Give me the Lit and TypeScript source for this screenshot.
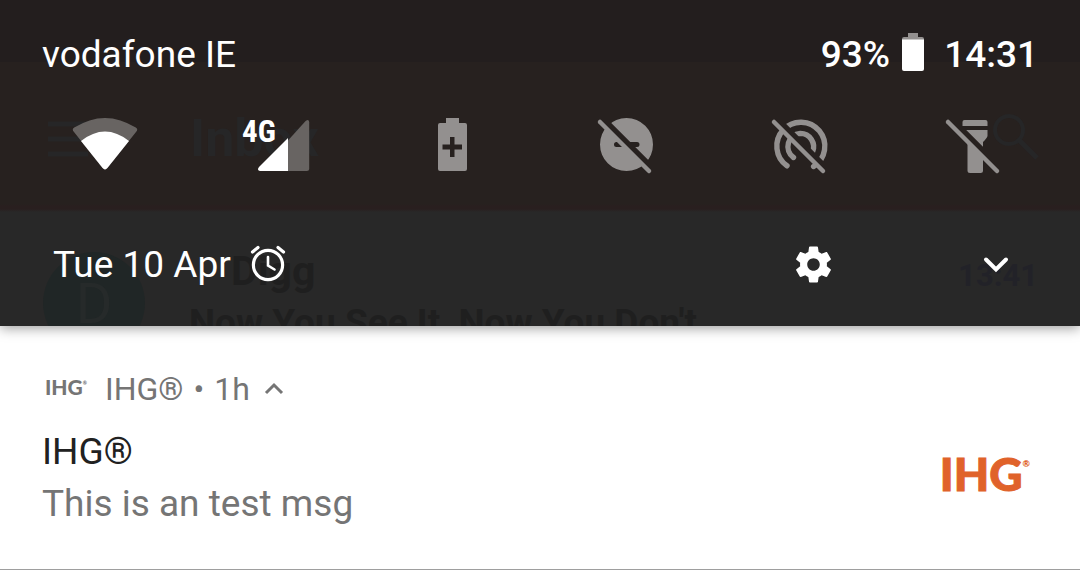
import { LitElement, html, svg, css } from "lit";
import { customElement } from "lit/decorators.js";

const slash = svg`<path d="M6 9 55 58" stroke="currentColor" stroke-width="4.5" stroke-linecap="round" />`;
const cut = (id: string) => svg`<mask id=${id} maskUnits="userSpaceOnUse" x="0" y="0" width="64" height="64">
  <path d="M0 0h64v64H0z" fill="#fff" />
  <path d="M5 2 64 61" stroke="#000" stroke-width="6" />
</mask>`;

const tiles = [
  {
    label: "Wi-Fi",
    cls: "on",
    art: svg`
      <path class="dim" d="M1 19Q-1.6 16.6 1.2 14.6Q32 -4.8 62.8 14.6Q65.6 16.6 63 19L34.4 55Q32 57.8 29.6 55Z" />
      <path d="M8 28Q32 9 56 28L34.4 55Q32 57.8 29.6 55Z" fill="#fff" />`,
  },
  {
    label: "Mobile data",
    cls: "on",
    art: svg`
      <path class="dim" d="M41 27.500L58.600 8q3.600-2.600 3.600 1.500V55.500q0 2.500-2.500 2.500H41z" />
      <path d="M41 25V58H13q-3.500-1-1-4z" fill="#fff" />
      <text class="network" x="-5" y="29">4G</text>`,
  },
  {
    label: "Battery Saver",
    cls: "off",
    art: svg`
      <path fill="currentColor" fill-rule="evenodd" d="M25 5h13v5h6q2 0 2 2v44q0 2-2 2H19q-2 0-2-2V12q0-2 2-2h6zM29 24v7.500H21.500v5H29V44h4.500v-7.500H41v-5h-7.500V24z" />`,
  },
  {
    label: "Do not disturb",
    cls: "off",
    art: svg`${cut("cut-dnd")}
      <path mask="url(#cut-dnd)" fill="currentColor" fill-rule="evenodd" d="M32.500 5a26.500 26.500 0 1 0 0 53a26.500 26.500 0 1 0 0-53zM22.500 29a2.500 2.500 0 0 0 0 5h20.500a2.500 2.500 0 0 0 0-5z" />${slash}`,
  },
  {
    label: "Hotspot",
    cls: "off",
    art: svg`${cut("cut-hotspot")}
      <g mask="url(#cut-hotspot)" stroke="currentColor" stroke-width="5.400" stroke-linecap="round">
        <path d="M19 52.800A24 24 0 1 1 45.600 53.500" />
        <path d="M25.500 44.500A13.300 13.300 0 0 1 32.300 20.400A13.300 13.300 0 0 1 44.500 39" />
      </g>${slash}`,
  },
  {
    label: "Flashlight",
    cls: "off",
    art: svg`${cut("cut-torch")}
      <path fill="currentColor" d="M20.500 9q0-2 2-2h21q2 0 2 2v4h-25z" />
      <path mask="url(#cut-torch)" fill="currentColor" d="M20.500 17h25v6q-.5 2-4.500 6v28.500q0 2.500-2.500 2.500h-10.500q-2.500 0-2.500-2.500V29q-5-4-5-6z" />${slash}`,
  },
];

@customElement("app-root")
export class AppRoot extends LitElement {
  static styles = css`
    :host {
      display: block;
      background: #fff;
      color: #fff;
      font-family: Roboto, "Noto Sans", sans-serif;
      font-size: 37px;
      line-height: 44px;
    }
    * {
      box-sizing: border-box;
    }
    button {
      display: block;
      margin: 0;
      padding: 0;
      border: 0;
      background: none;
      color: inherit;
      font: inherit;
    }
    svg {
      display: block;
      fill: none;
      overflow: visible;
    }
    .panel {
      position: relative;
      padding: 33px 0 39px;
      background: linear-gradient(#231e1e 62px, #27211f 62px 204px, #291f1f 206px 209px, #282828 212px);
      box-shadow: 0 2px 12px rgba(0, 0, 0, 0.4);
    }
    .status,
    .tiles,
    .date-row {
      position: relative;
      display: flex;
      align-items: center;
      justify-content: space-between;
    }
    .status {
      padding: 0 42px;
    }
    .system {
      display: flex;
      align-items: center;
      font-weight: 500;
    }
    .battery {
      margin: 0 20px 6px 12px;
    }
    .tiles {
      padding: 36px 74px 0 73px;
    }
    .off {
      color: #93908f;
    }
    .dim {
      fill: #686462;
    }
    .network {
      fill: #fff;
      font: 700 31px "Roboto Condensed", "Liberation Sans Narrow", Roboto, sans-serif;
    }
    .date-row {
      padding: 66px 72px 0 53px;
    }
    .date {
      display: flex;
      align-items: center;
      gap: 19px;
    }
    .alarm {
      margin-bottom: 2px;
    }
    .actions {
      display: flex;
      align-items: center;
      gap: 149px;
    }
    .settings {
      margin-bottom: 1px;
    }
    .behind {
      position: absolute;
      inset: 0;
      overflow: hidden;
      font-weight: 700;
    }
    .app-bar {
      display: flex;
      align-items: center;
      padding: 108px 40px 0 48px;
      height: 170px;
      color: #262627;
      font-size: 52px;
    }
    .app-title {
      flex: 1;
      margin-left: 102px;
    }
    .mail {
      display: flex;
      gap: 44px;
      padding: 77px 42px 0 43px;
      color: #1f1f1f;
      font-size: 37px;
    }
    .avatar {
      width: 102px;
      height: 102px;
      margin-top: 5px;
      border-radius: 50%;
      background: #202626;
      color: #262a2a;
      font-size: 56px;
      font-weight: 400;
      line-height: 104px;
      text-align: center;
    }
    .mail-text {
      flex: 1;
      white-space: nowrap;
    }
    .sender {
      margin-bottom: 6px;
      padding-left: 42px;
      font-size: 41px;
      line-height: 48px;
    }
    .mail-time {
      color: #222228;
      font-size: 31px;
      line-height: 58px;
    }
    .card {
      padding: 41px 50px 39px 42px;
      border-bottom: 1px solid #9e9e9e;
      color: #757575;
    }
    .card-head {
      display: flex;
      align-items: center;
      font-size: 32px;
    }
    .small-logo {
      margin: 0 18px 8px 3px;
      font: 900 21px/24px Lato, sans-serif;
    }
    .small-mark {
      font-size: 5px;
      vertical-align: 10px;
    }
    .source {
      display: flex;
      gap: 10px;
    }
    .collapse {
      margin-left: 15px;
    }
    .card-body {
      display: flex;
      align-items: flex-start;
      justify-content: space-between;
      padding-top: 15px;
    }
    .title,
    .message {
      margin: 0;
      font-size: 37px;
      font-weight: 400;
      line-height: 52px;
    }
    .title {
      color: #212121;
    }
    .logo {
      padding-top: 12px;
      color: #e0622a;
      font: 900 46px/52px Lato, sans-serif;
      -webkit-text-stroke: 1px currentColor;
    }
    .mark {
      font-size: 9px;
      vertical-align: 24px;
      -webkit-text-stroke: 0;
    }
  `;

  render() {
    return html`
      <section class="panel">
        <div class="behind" aria-hidden="true">
          <div class="app-bar">
            <svg width="40" height="36" viewBox="0 0 40 36"><path d="M0 3h40M0 18h40M0 33h40" stroke="currentColor" stroke-width="5" /></svg>
            <span class="app-title">Inbox</span>
            <svg width="46" height="46" viewBox="0 0 46 46"><circle cx="15" cy="14" r="14" stroke="currentColor" stroke-width="4" /><path d="m25 24 18 18" stroke="currentColor" stroke-width="5" /></svg>
          </div>
          <div class="mail">
            <div class="avatar">D</div>
            <div class="mail-text">
              <div class="sender">Digg</div>
              <div>Now You See It, Now You Don't</div>
            </div>
            <div class="mail-time">13:41</div>
          </div>
        </div>
        <div class="status">
          <span>vodafone IE</span>
          <div class="system">
            <span>93%</span>
            <svg class="battery" width="22" height="38" viewBox="0 0 22 38">
              <path d="M6 0h10v4h4q2 0 2 2v3H0V6q0-2 2-2h4z" fill="#93908f" />
              <path d="M0 6.500h22V36q0 2-2 2H2q-2 0-2-2z" fill="#fff" />
            </svg>
            <time>14:31</time>
          </div>
        </div>
        <div class="tiles">
          ${tiles.map(
            (t) => html`<button class=${t.cls} aria-label=${t.label}>
              <svg width="64" height="64" viewBox="0 0 64 64">${t.art}</svg>
            </button>`
          )}
        </div>
        <div class="date-row">
          <div class="date">
            <span>Tue 10 Apr</span>
            <svg class="alarm" width="36" height="36" viewBox="0 0 36 36" stroke="#fff" stroke-width="3.200" stroke-linecap="round">
              <circle cx="18" cy="19" r="14.600" />
              <path d="M2.500 6 8 1.500M33.500 6 28 1.500" />
              <path d="M18 11V19.500l6.500 4" stroke-width="2.600" />
            </svg>
          </div>
          <div class="actions">
            <button class="settings" aria-label="Settings">
              <svg width="43" height="43" viewBox="0 0 24 24">
                <path fill="#fff" d="M19.430 12.980c.04-.32.070-.640.070-.980s-.030-.660-.070-.980l2.110-1.650c.190-.150.240-.420.120-.640l-2-3.460c-.120-.220-.390-.300-.610-.220l-2.490 1c-.520-.400-1.080-.730-1.690-.980l-.380-2.650C14.460 2.180 14.250 2 14 2h-4c-.250 0-.460.180-.490.420l-.380 2.650c-.610.250-1.170.590-1.690.980l-2.490-1c-.230-.090-.490 0-.610.220l-2 3.460c-.130.220-.070.490.120.640l2.110 1.650c-.040.320-.070.650-.070.980s.030.660.070.980l-2.110 1.650c-.190.150-.240.420-.120.640l2 3.460c.120.220.390.300.610.220l2.490-1c.520.400 1.080.730 1.690.980l.380 2.650c.030.240.240.420.490.420h4c.250 0 .460-.180.490-.420l.380-2.650c.610-.250 1.170-.590 1.690-.980l2.490 1c.230.090.490 0 .610-.220l2-3.460c.120-.220.070-.490-.120-.640zM12 15.500c-1.930 0-3.500-1.570-3.500-3.500s1.570-3.500 3.500-3.500 3.500 1.570 3.500 3.500-1.570 3.500-3.500 3.500z" />
              </svg>
            </button>
            <button aria-label="Expand quick settings">
              <svg width="24" height="16" viewBox="0 0 24 16"><path d="m2 2.500 10 10 10-10" stroke="#fff" stroke-width="4" stroke-linecap="round" /></svg>
            </button>
          </div>
        </div>
      </section>
      <article class="card">
        <header class="card-head">
          <span class="small-logo">IHG<span class="small-mark">®</span></span>
          <span class="source"><span>IHG®</span><span>•</span><span>1h</span></span>
          <button class="collapse" aria-label="Collapse">
            <svg width="18" height="12" viewBox="0 0 18 12"><path d="m1 10 8-8 8 8" stroke="currentColor" stroke-width="3" /></svg>
          </button>
        </header>
        <div class="card-body">
          <div>
            <h2 class="title">IHG®</h2>
            <p class="message">This is an test msg</p>
          </div>
          <span class="logo">IHG<span class="mark">®</span></span>
        </div>
      </article>
    `;
  }
}
